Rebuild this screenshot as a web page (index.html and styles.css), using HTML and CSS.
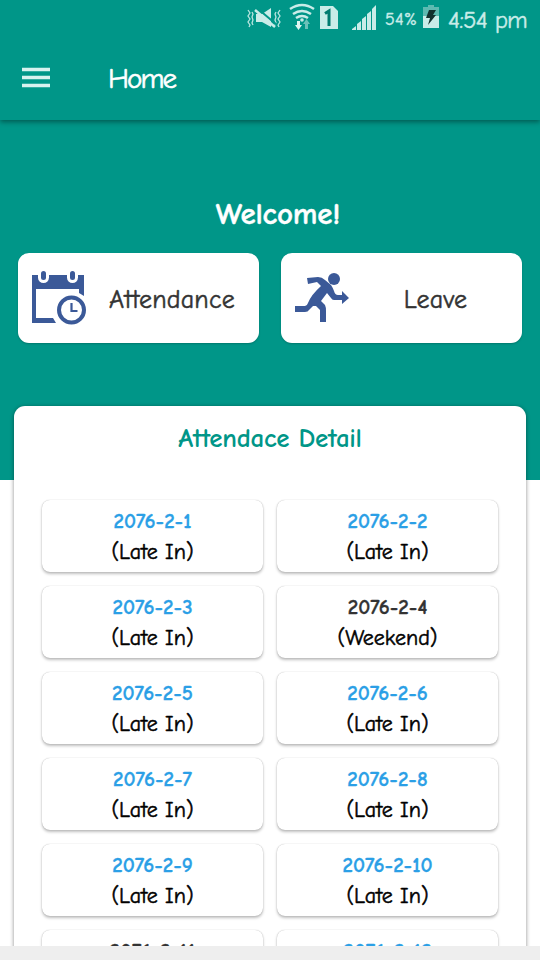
FILE: index.html
```html
<!DOCTYPE html>
<html lang="en">
<head>
    <meta charset="UTF-8">
    <meta name="viewport" content="width=device-width, initial-scale=1.0">
    <title>Home</title>
    <link rel="stylesheet" href="styles.css">
</head>
<body>
    <header class="header">
        <div class="status-bar">
            <svg class="status-icons" width="132" height="34" viewBox="0 0 132 34">
                <!-- Muted / vibrate -->
                <path d="M1 10l2 3-2 3 2 3-2 3 2 3-1 2M5 12l1 2-1 3 1 3-1 3 1 2M33 10l-2 3 2 3-2 3 2 3-2 3 1 2M29 12l-1 2 1 3-1 3 1 3-1 2" fill="none" stroke="#b9e5e0" stroke-width="1.300" />
                <path d="M9 14h6l9-6v19l-9-5H9z" fill="#c9ece8" />
                <path d="M10 8l20 17" stroke="#009688" stroke-width="2" />
                <path d="M8 10l20 17" stroke="#c9ece8" stroke-width="2.500" />
                <!-- Wifi -->
                <path d="M43 9q12-8 24 0M46 14q9-6 18 0M49 18q6-4 12 0" fill="none" stroke="#c9ece8" stroke-width="2.5" />
                <circle cx="55" cy="20" r="1.8" fill="#c9ece8" />
                <path d="M50 21h3v4h2l-3.500 5-3.500-5h2z" fill="#e0f5f2" />
                <path d="M58 29h3v-5h2l-3.500-5-3.500 5h2z" fill="#6bc1b9" />
                <!-- Sim 1 -->
                <path d="M73 6h13l5 5v18H73z" fill="#c9ece8" />
                <path d="M78 13.500l4-2.500v15" fill="none" stroke="#007a6f" stroke-width="3" />
                <!-- Signal -->
                <path d="M105 30v-1l4-3v4zM110 30v-6l4-3v9zM115 30V19l4-3v14zM120 30V14l4-3v19zM125 30V9l4-4v25z" fill="#c9ece8" />
            </svg>
            <span class="battery-text">54%</span>
            <svg class="battery" width="16" height="24" viewBox="0 0 16 24">
                <path d="M5 0h6v2h5v9H0V2h5z" fill="#5dbab1" />
                <path d="M0 11h16v12H0z" fill="#c9ece8" />
                <path d="M6 5h7l-3 5h3L5 20l2-7H3z" fill="#12312e" />
            </svg>
            <span class="clock">4:54 pm</span>
        </div>
        <div class="toolbar">
            <svg class="menu" width="28" height="22" viewBox="0 0 28 22">
                <path d="M0 2.500h28M0 10.500h28M0 18.500h28" stroke="#d8f2ef" stroke-width="3.500" />
            </svg>
            <h1 class="title">Home</h1>
        </div>
    </header>

    <main class="content">
        <h2 class="welcome">Welcome!</h2>

        <div class="actions">
            <button class="action">
                <svg class="action-icon" width="56" height="58" viewBox="0 0 56 58">
                    <path d="M0 6h52v21H0z" fill="#3b5998" />
                    <path d="M0 19h4v30h17l3 5H0z" fill="#3b5998" />
                    <path d="M4 20h43v10H4z" fill="#fff" />
                    <path d="M47 24l5 3v1h-5z" fill="#fff" />
                    <rect x="6" y="-1" width="11" height="15" rx="5.500" fill="#fff" />
                    <rect x="35" y="-1" width="11" height="15" rx="5.500" fill="#fff" />
                    <rect x="9" y="2" width="5" height="9" rx="2.500" fill="#3b5998" />
                    <rect x="38" y="2" width="5" height="9" rx="2.500" fill="#3b5998" />
                    <circle cx="39.500" cy="41" r="12.500" fill="#fff" stroke="#3b5998" stroke-width="4" />
                    <path d="M39.500 34v8h6" fill="none" stroke="#3b5998" stroke-width="2.200" />
                </svg>
                <span class="action-label">Attendance</span>
            </button>
            <button class="action">
                <svg class="action-icon" width="56" height="58" viewBox="0 0 56 58">
                    <circle cx="39" cy="10" r="6" fill="#3b5998" />
                    <path d="M12 9L23 8Q27 8 30 11L36 16Q38 19 39 22Q40 26 43 26H47V22L54 29L47 35V31H39Q37 31 36 29L32 24L26 32L30 36Q31 38 31 42V53H25V41L21 37H18L14 41Q13 43 10 43H0V37H10Q12 37 13 34Q16 26 26 17L22 13L13 15Z" fill="#3b5998" />
                </svg>
                <span class="action-label leave">Leave</span>
            </button>
        </div>

        <section class="panel">
            <h3 class="panel-title">Attendace Detail</h3>
            <div class="days">
                <div class="day"><b>2076-2-1</b><span>(Late In)</span></div>
                <div class="day"><b>2076-2-2</b><span>(Late In)</span></div>
                <div class="day"><b>2076-2-3</b><span>(Late In)</span></div>
                <div class="day weekend"><b>2076-2-4</b><span>(Weekend)</span></div>
                <div class="day"><b>2076-2-5</b><span>(Late In)</span></div>
                <div class="day"><b>2076-2-6</b><span>(Late In)</span></div>
                <div class="day"><b>2076-2-7</b><span>(Late In)</span></div>
                <div class="day"><b>2076-2-8</b><span>(Late In)</span></div>
                <div class="day"><b>2076-2-9</b><span>(Late In)</span></div>
                <div class="day"><b>2076-2-10</b><span>(Late In)</span></div>
                <div class="day weekend"><b>2076-2-11</b></div>
                <div class="day"><b>2076-2-12</b></div>
            </div>
        </section>
    </main>

    <footer class="footer"></footer>
</body>
</html>
```
FILE: styles.css
```css
* {
    margin: 0;
    padding: 0;
    box-sizing: border-box;
}

body {
    display: flex;
    flex-direction: column;
    height: 100vh;
    overflow: hidden;
    background: #fff;
    font-family: "Choco cooky", "Comic Neue", Lato, sans-serif;
    -webkit-text-stroke: 0.4px currentColor;
}

/* Header */
.header {
    flex: none;
    height: 120px;
    background: #009688;
    box-shadow: 0 2px 5px rgba(0, 0, 0, 0.4);
    z-index: 1;
}

.status-bar {
    display: flex;
    align-items: center;
    height: 38px;
    padding-left: 247px;
    color: #c9ece8;
    white-space: nowrap;
}

.status-icons {
    flex: none;
    margin-top: -4px;
}

.battery-text {
    width: 38px;
    margin-left: 6px;
    font-size: 18px;
    letter-spacing: 0.3px;
}

.battery {
    flex: none;
    margin-top: -4px;
}

.clock {
    margin-left: 9px;
    font-size: 25px;
    letter-spacing: -0.8px;
}

.toolbar {
    display: flex;
    align-items: center;
    height: 80px;
    padding-left: 22px;
    color: #fff;
}

.title {
    margin-left: 58px;
    font-size: 29px;
    font-weight: normal;
    letter-spacing: -1.9px;
    -webkit-text-stroke: 0.6px #fff;
}

/* Green area behind the cards */
.content {
    flex: 1;
    min-height: 0;
    overflow: hidden;
    padding: 74px 14px 0;
    background: linear-gradient(#009688 360px, #fff 360px);
}

.welcome {
    height: 59px;
    padding-left: 16px;
    color: #fff;
    font-size: 31px;
    line-height: 41px;
    letter-spacing: -0.2px;
    text-align: center;
    -webkit-text-stroke: 0.4px #fff;
}

.actions {
    display: flex;
    gap: 22px;
    padding: 0 4px;
}

.action {
    display: flex;
    flex: 1;
    align-items: center;
    height: 90px;
    padding: 0 10px 0 14px;
    border: none;
    border-radius: 11px;
    background: #fff;
    box-shadow: 0 1px 2px rgba(0, 0, 0, 0.2);
    color: #333;
    font-family: inherit;
    -webkit-text-stroke: 0.5px #333;
}

.action-icon {
    flex: none;
}

.action-label {
    flex: 1;
    padding-top: 3px;
    padding-left: 7px;
    font-size: 26px;
    line-height: 32px;
    letter-spacing: 0.2px;
}

.action-label.leave {
    padding-left: 8px;
}

/* Attendance list */
.panel {
    height: 800px;
    margin-top: 63px;
    padding: 10px 28px 0;
    border-radius: 11px;
    background: #fff;
    box-shadow: 0 1px 4px rgba(0, 0, 0, 0.45);
}

.panel-title {
    height: 84px;
    color: #009688;
    font-size: 27px;
    line-height: 45px;
    letter-spacing: -0.3px;
    text-align: center;
    white-space: nowrap;
    -webkit-text-stroke: 0;
}

.days {
    display: grid;
    grid-template-columns: 1fr 1fr;
    grid-auto-rows: 72px;
    gap: 14px;
}

.day {
    display: flex;
    flex-direction: column;
    padding-top: 7px;
    border-radius: 8px;
    background: #fff;
    box-shadow: 0 2px 3px rgba(0, 0, 0, 0.25), 0 0 1px rgba(0, 0, 0, 0.3);
    color: #000;
    font-size: 22px;
    line-height: 32px;
    text-align: center;
    -webkit-text-stroke: 0.5px #000;
}

.day b {
    color: #2b9fe6;
    font-size: 21px;
    line-height: 29px;
    -webkit-text-stroke: 0.3px #2b9fe6;
}

.day.weekend b {
    color: #333;
    -webkit-text-stroke-color: #333;
}

.footer {
    flex: none;
    height: 14px;
    background: #eee;
}
```
